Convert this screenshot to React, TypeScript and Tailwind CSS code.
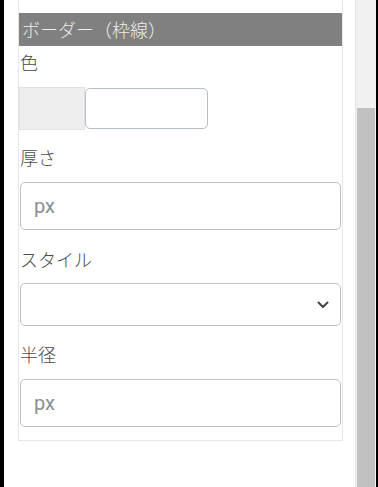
import React from "react";

const jp = { fontFamily: '"Noto Sans CJK JP", "Noto Sans", sans-serif' };
const latin = { fontFamily: 'Roboto, "Noto Sans", sans-serif' };

function Label({ children }: { children: React.ReactNode }) {
  return (
    <div className="h-[24px] leading-[24px] text-[18px] text-[#4a4a4a] pl-[1px] font-light" style={jp}>
      {children}
    </div>
  );
}

function PxInput() {
  return (
    <div className="mx-[1px] h-[48px] rounded-[5px] border border-[#bcc2ca] bg-white flex items-center pl-[13px]">
      <span className="text-[20px] text-[#8a8d91]" style={latin}>px</span>
    </div>
  );
}

export default function App() {
  return (
    <div className="w-[378px] h-[487px] bg-black flex overflow-hidden">
      <div className="w-[4px] shrink-0 bg-black" />
      <div className="flex-1 bg-white pl-[14px] flex">
        <div className="w-[325px] h-[441px] border-x border-b border-[#e6e6e6] flex flex-col">
          <div className="h-[13px] shrink-0" />
          <div
            className="h-[33px] shrink-0 bg-[#808080] text-[#ececec] text-[18px] leading-[33px] pl-[3px] font-light"
            style={jp}
          >
            ボーダー（枠線）
          </div>
          <div className="mt-[4px]">
            <Label>色</Label>
          </div>
          <div className="mt-[13px] flex items-center h-[43px]">
            <div className="w-[66px] h-[43px] bg-[#eeeeee] border border-[#e2e2e2]" />
            <div className="w-[123px] h-[41px] rounded-[5px] border border-[#b5bcc4] bg-white" />
          </div>
          <div className="mt-[15px]">
            <Label>厚さ</Label>
          </div>
          <div className="mt-[13px]">
            <PxInput />
          </div>
          <div className="mt-[17px]">
            <Label>スタイル</Label>
          </div>
          <div className="mt-[12px] mx-[1px] h-[43px] rounded-[5px] border border-[#bcc2ca] bg-white flex items-center justify-end pr-[11px]">
            <svg width="12" height="8" viewBox="0 0 12 8" fill="none">
              <path d="M1.5 1.5 L6 6 L10.5 1.5" stroke="#444" strokeWidth="2" strokeLinecap="round" strokeLinejoin="round" />
            </svg>
          </div>
          <div className="mt-[16px]">
            <Label>半径</Label>
          </div>
          <div className="mt-[13px]">
            <PxInput />
          </div>
        </div>
      </div>
      <div className="w-[21px] shrink-0 bg-[#f1f1f1] border-l border-[#e4e4e4] flex flex-col pl-[1px] pr-[1px]">
        <div className="h-[108px] shrink-0" />
        <div className="flex-1 bg-[#c1c1c1]" />
      </div>
      <div className="w-[2px] shrink-0 bg-black" />
    </div>
  );
}
